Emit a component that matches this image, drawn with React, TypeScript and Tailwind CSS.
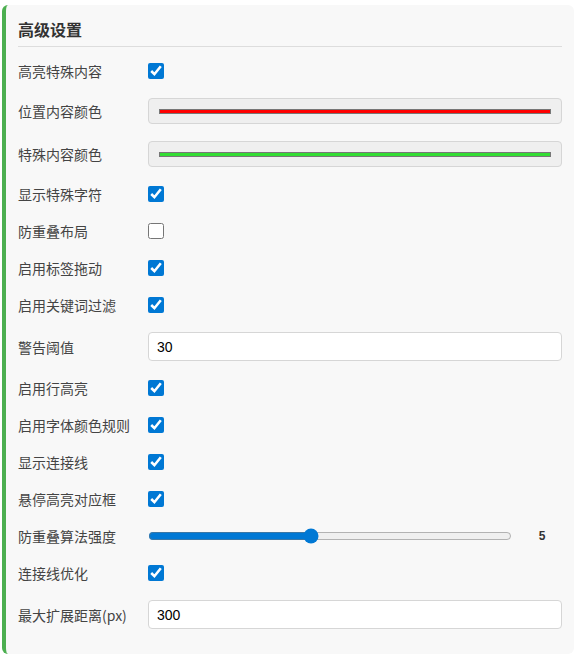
import React from 'react';

type Row =
  | { label: string; kind: 'check'; checked: boolean }
  | { label: string; kind: 'color'; color: string }
  | { label: string; kind: 'text'; value: string }
  | { label: string; kind: 'range'; value: number };

const rows: Row[] = [
  { label: '高亮特殊内容', kind: 'check', checked: true },
  { label: '位置内容颜色', kind: 'color', color: '#ff0000' },
  { label: '特殊内容颜色', kind: 'color', color: '#33dd33' },
  { label: '显示特殊字符', kind: 'check', checked: true },
  { label: '防重叠布局', kind: 'check', checked: false },
  { label: '启用标签拖动', kind: 'check', checked: true },
  { label: '启用关键词过滤', kind: 'check', checked: true },
  { label: '警告阈值', kind: 'text', value: '30' },
  { label: '启用行高亮', kind: 'check', checked: true },
  { label: '启用字体颜色规则', kind: 'check', checked: true },
  { label: '显示连接线', kind: 'check', checked: true },
  { label: '悬停高亮对应框', kind: 'check', checked: true },
  { label: '防重叠算法强度', kind: 'range', value: 5 },
  { label: '连接线优化', kind: 'check', checked: true },
  { label: '最大扩展距离(px)', kind: 'text', value: '300' },
];

const Control = ({ row }: { row: Row }) => {
  if (row.kind === 'check') {
    return (
      <input
        type="checkbox"
        defaultChecked={row.checked}
        className="m-0 w-4 h-4 accent-[#0078d4]"
      />
    );
  }
  if (row.kind === 'color') {
    return (
      <div className="flex-1 h-[26px] bg-[#efefef] border border-[#d6d6d6] rounded-[4px] px-[10px] flex items-center">
        <div className="w-full h-[5px] border border-[#777]" style={{ background: row.color }} />
      </div>
    );
  }
  if (row.kind === 'text') {
    return (
      <input
        type="text"
        defaultValue={row.value}
        className="flex-1 h-[29px] bg-white border border-[#d6d6d6] rounded-[4px] px-2 text-[14px] text-black outline-none font-['Liberation_Sans',Arial,sans-serif]"
      />
    );
  }
  return (
    <div className="flex-1 flex items-center">
      <input
        type="range"
        min={1}
        max={10}
        defaultValue={row.value}
        className="m-0 flex-1 accent-[#0078d4]"
      />
      <span className="w-[40px] ml-[10px] text-center text-[12px] font-bold text-[#333] font-['Liberation_Sans',Arial,sans-serif]">
        {row.value}
      </span>
    </div>
  );
};

export default function App() {
  return (
    <div className="bg-white min-h-[659px] pt-[5px] px-[2px] font-['Noto_Sans_CJK_SC','Noto_Sans',sans-serif]">
      <div className="w-[572px] bg-[#f8f8f8] border-l-4 border-[#4caf50] rounded-[6px] pl-[12px] pr-[12px] pt-[12px] pb-[25px]">
        <h3 className="text-[16px] leading-[24px] font-bold text-[#333] pb-[5px] border-b border-[#ddd] mb-[14px]">
          高级设置
        </h3>
        <div className="flex flex-col gap-[17px]">
          {rows.map((row) => (
            <div key={row.label} className="flex items-center min-h-[20px]">
              <label className="w-[130px] shrink-0 text-[14px] leading-[20px] text-[#444]">
                {row.label}
              </label>
              <Control row={row} />
            </div>
          ))}
        </div>
      </div>
    </div>
  );
}
